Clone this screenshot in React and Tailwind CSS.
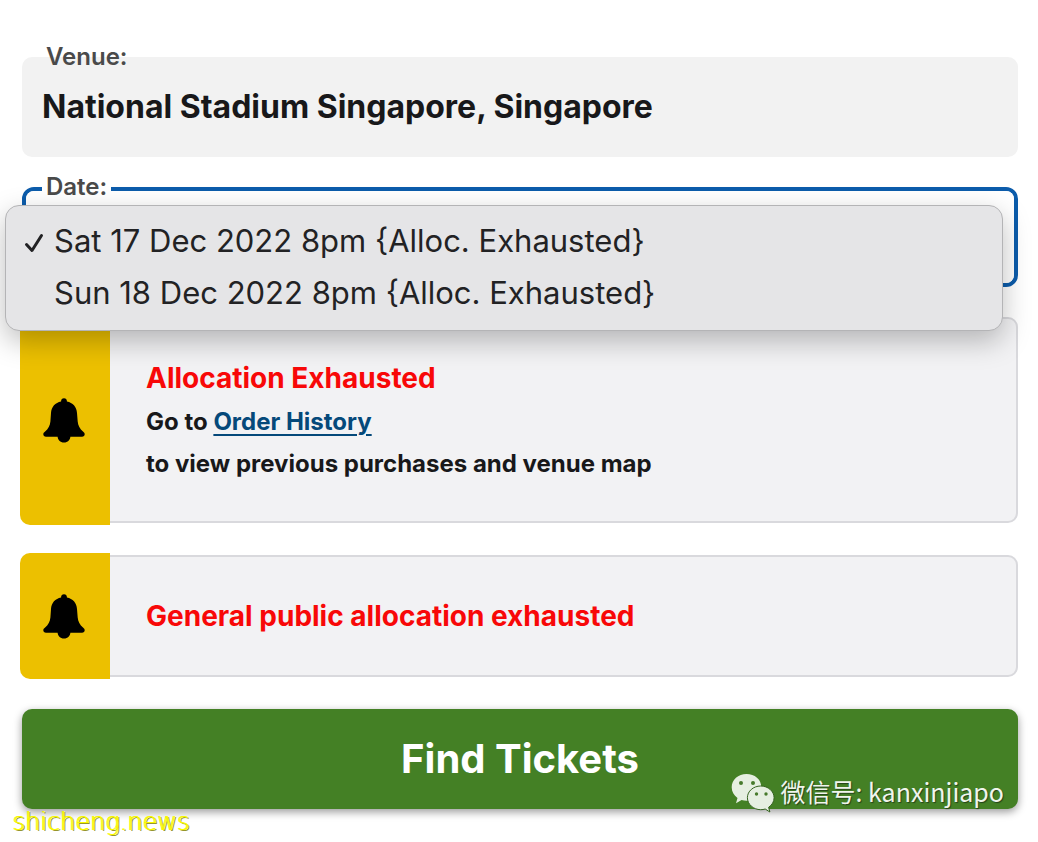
import React from "react";

function BellIcon() {
  return (
    <svg viewBox="0 0 42 45" className="h-[45px] w-[42px]" fill="#000" aria-hidden="true">
      <path d="M21 0.3c-1.800 0-2.900 1.200-2.900 2.800v.4C12.200 4.600 8.400 8.800 8 15l-.6 8.600c-.4 4.400-2.200 7.200-5.300 10C.9 34.600.3 35.300.3 36.300c0 1.500 1.100 2.500 2.700 2.500h36c1.600 0 2.700-1 2.700-2.500 0-1-.6-1.700-1.700-2.700-3.100-2.800-4.900-5.600-5.300-10L34 15c-.4-6.200-4.200-10.400-10.100-11.500v-.4C23.900 1.500 22.800.3 21 .3z" />
      <path d="M14.600 38h12.800c0 3.900-2.700 6.600-6.400 6.600s-6.400-2.700-6.400-6.600z" />
    </svg>
  );
}

function WeChatIcon() {
  return (
    <svg viewBox="0 0 44 40" className="h-10 w-11 shrink-0" aria-hidden="true">
      <path
        d="M15.500 1C7.200 1 .7 6.700.7 14.200c0 4.500 2.200 8.200 5.800 10.700L5 30.300l5.600-3.300c1.600.5 3.200.7 4.900.7 8.200 0 14.800-5.700 14.800-13.500S23.700 1 15.500 1z"
        fill="#e6efe1"
      />
      <path
        d="M29.700 13c-7.300 0-13.300 5.200-13.300 11.700s6 12 13.300 12c1.600 0 3.100-.2 4.500-.7l4.700 3-1.300-4.700c3.400-2.300 5.500-5.700 5.500-9.600C43.100 18.200 37 13 29.700 13z"
        fill="#e6efe1"
        stroke="#35621f"
        strokeWidth="1"
      />
      <g fill="#477a2c">
        <circle cx="10" cy="10" r="2" />
        <circle cx="22" cy="10" r="2" />
        <circle cx="25.500" cy="21" r="1.700" />
        <circle cx="35" cy="21" r="1.700" />
      </g>
    </svg>
  );
}

function Alert({ children }) {
  return (
    <section className="flex rounded-[10px] border-2 border-[#d9d9dd] bg-[#f2f2f4]">
      <div className="-my-1 -ml-1 flex w-[90px] shrink-0 items-center rounded-l-[10px] bg-[#ecc000] pl-[23px]">
        <BellIcon />
      </div>
      <div className="px-9">{children}</div>
    </section>
  );
}

const dates = [
  "Sat 17 Dec 2022 8pm {Alloc. Exhausted}",
  "Sun 18 Dec 2022 8pm {Alloc. Exhausted}",
];

function DateMenu() {
  return (
    <div
      role="listbox"
      aria-label="Date"
      className="absolute -left-[21px] right-[11px] top-[14px] z-10 rounded-[14px] border border-[#b4b4b6] bg-[#e5e5e7] pt-[9px] pb-[11px] shadow-[0_10px_28px_rgba(0,0,0,0.26)]"
    >
      {dates.map((date, i) => (
        <button
          key={date}
          type="button"
          role="option"
          aria-selected={i === 0}
          className="flex h-[52px] w-full items-center pl-[18px] text-left text-[31px] text-[#222224]"
        >
          <span className="w-[30px] shrink-0">
            {i === 0 && (
              <svg viewBox="0 0 20 20" className="mt-1 h-5 w-5" fill="none" stroke="#222224" strokeWidth="3" strokeLinecap="round" strokeLinejoin="round" aria-hidden="true">
                <path d="M2.500 11.500l5.500 6L17.500 2.500" />
              </svg>
            )}
          </span>
          {date}
        </button>
      ))}
    </div>
  );
}

export default function App() {
  return (
    <main className="relative min-h-screen bg-white pt-[57px] pr-5 pb-8 pl-[22px] font-['Inter',sans-serif] text-[#18181a]">
      <section className="relative h-[100px] rounded-[10px] bg-[#f2f2f2] px-5 pt-[30px]">
        <h2 className="absolute -top-4 left-6 text-2xl font-semibold text-[#4a4a4a]">Venue:</h2>
        <p className="text-[32px] leading-10 font-bold">National Stadium Singapore, Singapore</p>
      </section>

      <div className="relative mt-[30px] h-[100px] rounded-[12px] border-4 border-[#0c5cab]">
        <label htmlFor="date" className="absolute -top-5 left-4 bg-white px-1 text-2xl font-semibold text-[#4a4a4a]">
          Date:
        </label>
        <select id="date" className="h-full w-full appearance-none rounded-lg bg-white px-4 text-[32px] font-bold text-transparent">
          {dates.map((date) => (
            <option key={date}>{date}</option>
          ))}
        </select>
        <DateMenu />
      </div>

      <div className="mt-[30px] flex flex-col gap-8">
        <Alert>
          <div className="pt-[38px] pb-9">
            <h3 className="text-[28px] leading-[42px] font-bold text-[#f80808]">Allocation Exhausted</h3>
            <p className="pt-[2px] text-2xl leading-[42px] font-bold">
              Go to{" "}
              <a href="#orders" className="text-[#05497a] underline decoration-2 underline-offset-4">
                Order History
              </a>
              <br />
              to view previous purchases and venue map
            </p>
          </div>
        </Alert>
        <Alert>
          <h3 className="py-[38px] text-[28px] leading-[42px] font-bold text-[#f80808]">
            General public allocation exhausted
          </h3>
        </Alert>
        <button
          type="button"
          className="h-[100px] rounded-[10px] bg-[#448025] text-[40px] font-bold text-white shadow-[0_3px_8px_rgba(0,0,0,0.4)]"
        >
          Find Tickets
        </button>
      </div>

      <div className="absolute top-[773px] right-[34px] flex items-start gap-[6px] font-['Noto_Sans_CJK_SC',sans-serif] text-[25px] leading-9 text-[#f0f5ed] [text-shadow:1px_1px_1px_#24421a]">
        <WeChatIcon />
        <span>微信号: kanxinjiapo</span>
      </div>
      <div className="absolute top-[804px] left-3 font-['DejaVu_Sans',sans-serif] text-2xl leading-9 font-extralight text-[#f8f800] [text-shadow:1px_0_0_#f8f800,2px_1px_0_#96962a]">
        shicheng.news
      </div>
    </main>
  );
}
